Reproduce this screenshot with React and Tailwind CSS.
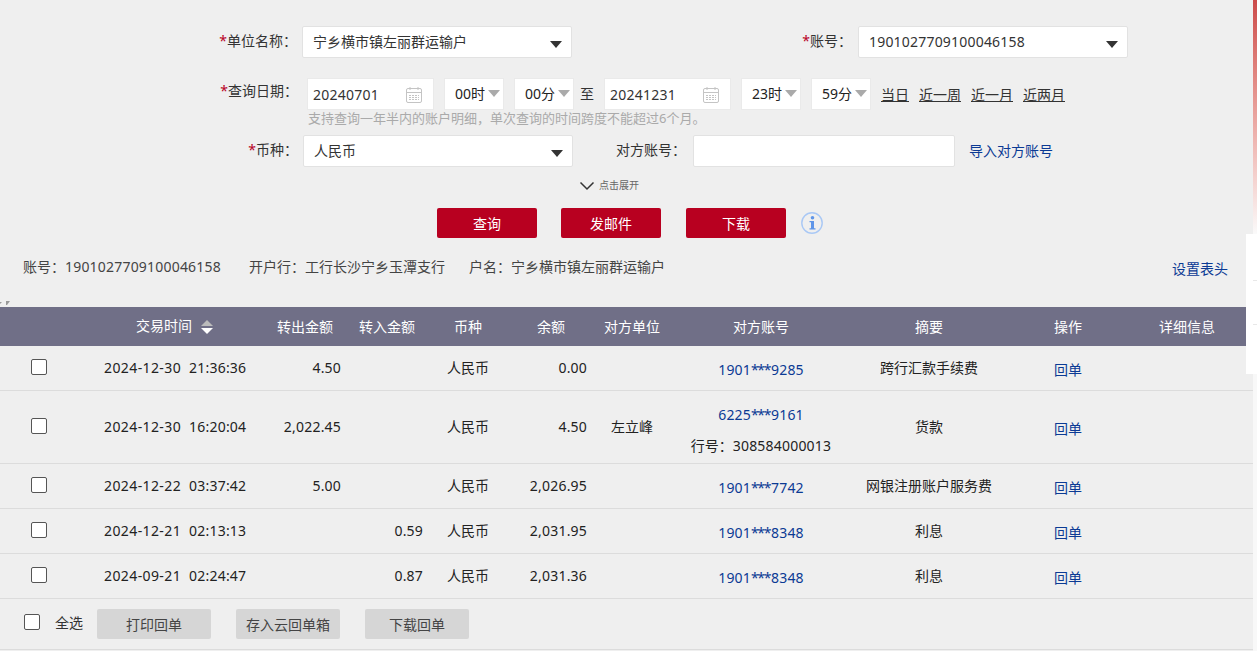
const font = { fontFamily: '"Noto Sans", "Noto Sans CJK SC", sans-serif' };

const Caret = ({ className }) => (
  <span className={`absolute w-0 h-0 border-x-[6px] border-x-transparent border-t-[7px] ${className}`} />
);

const Calendar = ({ x }) => (
  <svg className="absolute top-[7px]" style={{ left: x }} width="18" height="18" viewBox="0 0 18 18" fill="none" stroke="#c4c4c4">
    <rect x="1.5" y="2.5" width="15" height="14" rx="1.5" />
    <path d="M1.5 6.5h15M5 1v3M13 1v3" />
    <path d="M4 9.5h10M4 11.5h10M4 13.5h10" strokeDasharray="2 1" />
  </svg>
);

const Select = ({ left, top, width, num, children }) => (
  <div className={`absolute h-[32px] bg-white border border-[#e2e2e2] rounded-[2px] text-[14px] leading-[30px] text-[#333] pl-[10px] ${num ? 'tracking-[0.2px]' : ''}`} style={{ left, top, width }}>
    {children}
    <Caret className="right-[9px] top-[14px] border-t-[#333]" />
  </div>
);

const DateBox = ({ left, width, value, iconX }) => (
  <div className="absolute top-[78px] h-[32px] bg-white border border-[#eaeaea] text-[14px] leading-[31px] tracking-[0.25px] text-[#333] pl-[5px]" style={{ left, width }}>
    {value}
    <Calendar x={iconX} />
  </div>
);

const TimeBox = ({ left, width, value }) => (
  <div className="absolute top-[78px] h-[32px] bg-white border border-[#eaeaea] text-[14px] leading-[30px] text-[#222] pl-[10px]" style={{ left, width }}>
    {value}
    <Caret className="right-[3px] top-[11px] border-t-[#aaa]" />
  </div>
);

const Label = ({ right, top, required, children }) => (
  <div className="absolute text-[14px] leading-[20px] text-[#333] whitespace-nowrap" style={{ right: 1257 - right, top }}>
    {required && <span className="text-[#b8001f]">*</span>}
    {children}
  </div>
);

const columns = [
  { label: '交易时间', cx: 164, top: 9 },
  { label: '转出金额', cx: 305, top: 10 },
  { label: '转入金额', cx: 387, top: 10 },
  { label: '币种', cx: 468, top: 10 },
  { label: '余额', cx: 551, top: 10 },
  { label: '对方单位', cx: 632, top: 10 },
  { label: '对方账号', cx: 761, top: 10 },
  { label: '摘要', cx: 929, top: 10 },
  { label: '操作', cx: 1068, top: 10 },
  { label: '详细信息', cx: 1187, top: 10 },
];

const rows = [
  { top: 346, h: 45, date: '2024-12-30', time: '21:36:36', out: '4.50', bal: '0.00', acct: '1901***9285', memo: '跨行汇款手续费' },
  { top: 391, h: 73, date: '2024-12-30', time: '16:20:04', out: '2,022.45', bal: '4.50', name: '左立峰', acct: '6225***9161', bank: '308584000013', memo: '货款' },
  { top: 464, h: 45, date: '2024-12-22', time: '03:37:42', out: '5.00', bal: '2,026.95', acct: '1901***7742', memo: '网银注册账户服务费' },
  { top: 509, h: 45, date: '2024-12-21', time: '02:13:13', in: '0.59', bal: '2,031.95', acct: '1901***8348', memo: '利息' },
  { top: 554, h: 45, date: '2024-09-21', time: '02:24:47', in: '0.87', bal: '2,031.36', acct: '1901***8348', memo: '利息' },
];

const Check = ({ left, top }) => (
  <span className="absolute w-[16px] h-[16px] bg-white border border-[#555] rounded-[2px]" style={{ left, top }} />
);

const Centered = ({ cx, top, className = '', children }) => (
  <div className={`absolute -translate-x-1/2 whitespace-nowrap text-[14px] leading-[20px] ${className}`} style={{ left: cx, top }}>{children}</div>
);

// positions are page x; rows are 1253 wide because of the scrollbar strip
const RightAligned = ({ right, top, children }) => (
  <div className="absolute whitespace-nowrap text-[14px] leading-[20px] tracking-[0.2px] text-[#222]" style={{ right: 1253 - right, top }}>{children}</div>
);

const Account = ({ value }) => (
  <>
    <span className="tracking-[0.2px]">{value.slice(0, 4)}</span>
    <span className="tracking-[-1.4px] pr-[1px]">***</span>
    <span className="tracking-[0.2px]">{value.slice(-4)}</span>
  </>
);

const Row = ({ row }) => {
  const mid = Math.round(row.h / 2) - 12;
  return (
    <div className="absolute left-0 w-[1253px] border-b border-[#dcdcdc]" style={{ top: row.top, height: row.h }}>
      <Check left={31} top={mid + 2} />
      <div className="absolute left-[104px] whitespace-nowrap text-[14px] leading-[20px] text-[#222]" style={{ top: mid + 1 }}>
        <span className="tracking-[0.4px]">{row.date}</span><span className="ml-[8px] tracking-[0.2px]">{row.time}</span>
      </div>
      {row.out && <RightAligned right={341} top={mid + 1}>{row.out}</RightAligned>}
      {row.in && <RightAligned right={423} top={mid + 1}>{row.in}</RightAligned>}
      <Centered cx={468} top={mid + 1} className="text-[#222]">人民币</Centered>
      <RightAligned right={587} top={mid + 1}>{row.bal}</RightAligned>
      {row.name && <Centered cx={632} top={mid + 1} className="text-[#222]">{row.name}</Centered>}
      {row.bank ? (
        <>
          <Centered cx={761} top={14} className="text-[#0b3a94]"><Account value={row.acct} /></Centered>
          <Centered cx={761} top={45} className="text-[#222]">行号：<span className="tracking-[0.2px]">{row.bank}</span></Centered>
        </>
      ) : (
        <Centered cx={761} top={mid + 3} className="text-[#0b3a94]"><Account value={row.acct} /></Centered>
      )}
      <Centered cx={929} top={mid + 1} className="text-[#222]">{row.memo}</Centered>
      <Centered cx={1068} top={mid + 3} className="text-[#0b3a94]">回单</Centered>
    </div>
  );
};

export default function App() {
  return (
    <div className="relative w-[1257px] h-[651px] overflow-hidden bg-[#efefef]" style={font}>
      <Label right={297} top={31} required>单位名称：</Label>
      <Select left={302} top={26} width={270}>宁乡横市镇左丽群运输户</Select>
      <Label right={852} top={31} required>账号：</Label>
      <Select left={858} top={26} width={270} num>1901027709100046158</Select>

      <Label right={298} top={81} required>查询日期：</Label>
      <DateBox left={307} width={127} value="20240701" iconX={97} />
      <TimeBox left={444} width={60} value="00时" />
      <TimeBox left={514} width={60} value="00分" />
      <div className="absolute left-[580px] top-[84px] text-[14px] leading-[20px] text-[#333]">至</div>
      <DateBox left={604} width={127} value="20241231" iconX={97} />
      <TimeBox left={741} width={60} value="23时" />
      <TimeBox left={811} width={60} value="59分" />
      <div className="absolute left-[881px] top-[85px] flex text-[14px] leading-[20px] text-[#333] underline">
        <span>当日</span>
        <span className="ml-[10px]">近一周</span>
        <span className="ml-[10px]">近一月</span>
        <span className="ml-[10px]">近两月</span>
      </div>
      <div className="absolute left-[308px] top-[108px] text-[13px] leading-[20px] text-[#aaa] whitespace-nowrap">支持查询一年半内的账户明细，单次查询的时间跨度不能超过6个月。</div>

      <Label right={298} top={140} required>币种：</Label>
      <Select left={303} top={135} width={270}>人民币</Select>
      <Label right={686} top={140}>对方账号：</Label>
      <div className="absolute left-[693px] top-[135px] w-[262px] h-[32px] bg-white border border-[#e2e2e2] rounded-[2px]" />
      <div className="absolute left-[969px] top-[141px] text-[14px] leading-[20px] text-[#0b3a94]">导入对方账号</div>

      <svg className="absolute left-[579px] top-[181px]" width="16" height="10" viewBox="0 0 16 10" fill="none" stroke="#333" strokeWidth="1.5">
        <path d="M1.5 1.5 8 8l6.5-6.5" />
      </svg>
      <div className="absolute left-[599px] top-[178px] text-[10px] leading-[14px] text-[#666]">点击展开</div>

      {[['查询', 437], ['发邮件', 561], ['下载', 686]].map(([text, left]) => (
        <button key={text} className="absolute top-[208px] w-[100px] h-[30px] bg-[#b80020] rounded-[2px] text-white text-[14px]" style={{ left }}>{text}</button>
      ))}
      <svg className="absolute left-[801px] top-[212px]" width="22" height="22" viewBox="0 0 22 22">
        <circle cx="11" cy="11" r="10.2" fill="none" stroke="#a9c8f5" strokeWidth="1.4" />
        <circle cx="11.5" cy="5.8" r="1.8" fill="#5f95e8" />
        <path d="M8.5 9h4.5v7.2h1.5v1.3H8.5v-1.3H10v-5.9H8.5z" fill="#5f95e8" />
      </svg>

      <div className="absolute left-[23px] top-[257px] flex text-[14px] leading-[20px] text-[#444] whitespace-nowrap">
        <span>账号：<span className="tracking-[0.2px]">1901027709100046158</span></span>
        <span className="ml-[28px]">开户行：工行长沙宁乡玉潭支行</span>
        <span className="ml-[24px]">户名：宁乡横市镇左丽群运输户</span>
      </div>
      <div className="absolute left-[1172px] top-[259px] text-[14px] leading-[20px] text-[#0b3a94]">设置表头</div>

      <svg className="absolute left-0 top-[300px]" width="12" height="6" viewBox="0 0 12 6" fill="#999">
        <path d="M0 2h2L0 4zM6 1h4L7 5H6z" />
      </svg>

      <div className="absolute left-0 top-[307px] w-[1257px] h-[39px] bg-[#706f87] text-white">
        {columns.map((c) => (
          <Centered key={c.label} cx={c.cx} top={c.top}>{c.label}</Centered>
        ))}
        <span className="absolute left-[201px] top-[13px] w-0 h-0 border-x-[6px] border-x-transparent border-b-[6px] border-b-[#bbb]" />
        <span className="absolute left-[201px] top-[21px] w-0 h-0 border-x-[6px] border-x-transparent border-t-[6px] border-t-white" />
      </div>

      {rows.map((row) => <Row key={row.top} row={row} />)}

      <Check left={24} top={614} />
      <div className="absolute left-[55px] top-[613px] text-[14px] leading-[20px] text-[#333]">全选</div>
      {[['打印回单', 97, 114], ['存入云回单箱', 236, 104], ['下载回单', 365, 104]].map(([text, left, width]) => (
        <button key={text} className="absolute top-[609px] h-[30px] bg-[#d6d6d6] rounded-[2px] text-[14px] text-[#444]" style={{ left, width }}>{text}</button>
      ))}
      <div className="absolute left-0 top-[649px] w-[1253px] h-px bg-[#dcdcdc]" />

      <div className="absolute right-0 top-[234px] w-[11px] h-[140px] bg-white">
        <div className="absolute right-0 top-[46px] w-[4px] h-px bg-[#e8e8e8]" />
        <div className="absolute right-0 top-[90px] w-[4px] h-px bg-[#e8e8e8]" />
      </div>
      <div className="absolute right-0 top-0 w-[4px] h-[234px] bg-gradient-to-b from-[#cc4a4a] to-[#fafafa]" />
      <div className="absolute right-0 top-[374px] w-[4px] h-[277px] bg-[#f8f8f8]" />
    </div>
  );
}
